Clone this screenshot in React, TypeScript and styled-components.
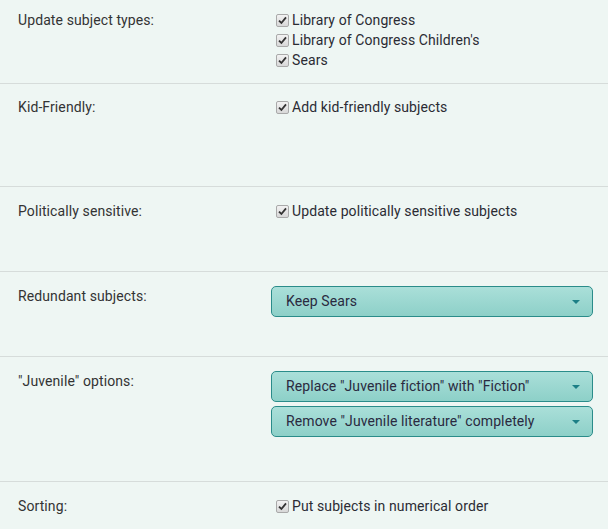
import React from "react";
import styled, { createGlobalStyle } from "styled-components";

const GlobalStyle = createGlobalStyle`
  html, body {
    margin: 0;
    padding: 0;
    background: #eef6f3;
  }
  body {
    font-family: Roboto, "Liberation Sans", Arial, sans-serif;
    font-size: 14px;
    letter-spacing: 0.1px;
    color: #333;
  }
`;

const Page = styled.div`
  width: 608px;
  background: #eef6f3;
`;

const Row = styled.div<{ $height: number; $top?: number }>`
  display: grid;
  grid-template-columns: 253px 322px;
  padding: ${(p) => p.$top ?? 15}px 15px 0 18px;
  height: ${(p) => p.$height}px;
  box-sizing: border-box;
  border-bottom: 1px solid #d6dcda;
  &:last-child {
    border-bottom: none;
  }
`;

const Label = styled.div`
  line-height: 20px;
  color: #333;
`;

const Controls = styled.div`
  display: flex;
  flex-direction: column;
  gap: 4px;
`;

const CheckList = styled.div`
  display: flex;
  flex-direction: column;
  padding-left: 5px;
`;

const CheckRow = styled.label`
  display: flex;
  align-items: center;
  gap: 3px;
  height: 20px;
  line-height: 20px;
  color: #2b2b33;
`;

const Box = styled.span`
  width: 13px;
  height: 13px;
  box-sizing: border-box;
  border: 1px solid #a9a9a9;
  border-radius: 2px;
  background: linear-gradient(#f2f2f2, #d8d8d8);
  display: flex;
  align-items: center;
  justify-content: center;
`;

const Select = styled.div`
  height: 31px;
  box-sizing: border-box;
  border: 1px solid #2a8c8a;
  border-radius: 5px;
  background: linear-gradient(#aadfd9, #8dd0c8);
  display: flex;
  align-items: center;
  justify-content: space-between;
  padding: 0 12px 1px 14px;
  color: #2a2a40;
`;

const Arrow = styled.span`
  width: 0;
  height: 0;
  margin-top: 2px;
  border-left: 4px solid transparent;
  border-right: 4px solid transparent;
  border-top: 4px solid #1c7f86;
`;

const Check = ({ label }: { label: string }) => (
  <CheckRow>
    <Box>
      <svg width="9" height="9" viewBox="0 0 9 9">
        <path d="M1 4.6 L3.4 7 L8 1.4" fill="none" stroke="#333" strokeWidth="1.8" />
      </svg>
    </Box>
    {label}
  </CheckRow>
);

const Dropdown = ({ value }: { value: string }) => (
  <Select>
    {value}
    <Arrow />
  </Select>
);

export default function App() {
  return (
    <Page>
      <GlobalStyle />
      <Row $height={84} $top={10}>
        <Label>Update subject types:</Label>
        <CheckList>
          <Check label="Library of Congress" />
          <Check label="Library of Congress Children's" />
          <Check label="Sears" />
        </CheckList>
      </Row>
      <Row $height={103} $top={13}>
        <Label>Kid-Friendly:</Label>
        <CheckList>
          <Check label="Add kid-friendly subjects" />
        </CheckList>
      </Row>
      <Row $height={85} $top={14}>
        <Label>Politically sensitive:</Label>
        <CheckList>
          <Check label="Update politically sensitive subjects" />
        </CheckList>
      </Row>
      <Row $height={85} $top={14}>
        <Label>Redundant subjects:</Label>
        <Controls>
          <Dropdown value="Keep Sears" />
        </Controls>
      </Row>
      <Row $height={125} $top={14}>
        <Label>"Juvenile" options:</Label>
        <Controls>
          <Dropdown value={'Replace "Juvenile fiction" with "Fiction"'} />
          <Dropdown value={'Remove "Juvenile literature" completely'} />
        </Controls>
      </Row>
      <Row $height={48} $top={14}>
        <Label>Sorting:</Label>
        <CheckList>
          <Check label="Put subjects in numerical order" />
        </CheckList>
      </Row>
    </Page>
  );
}
